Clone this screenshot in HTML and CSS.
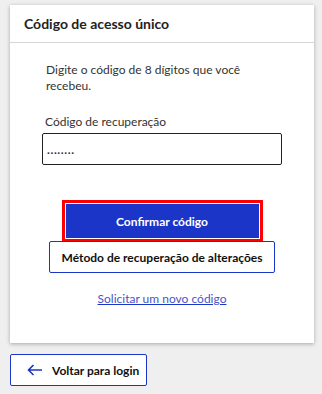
FILE: index.html
```html
<!doctype html>
<html lang="pt">
  <head>
    <meta charset="UTF-8" />
    <meta name="viewport" content="width=device-width, initial-scale=1.0" />
    <title>Código de acesso único</title>
    <link rel="stylesheet" href="styles.css">
  </head>
  <body>
    <div class="card">
      <div class="card-header">
        <h1>Código de acesso único</h1>
      </div>
      <div class="card-body">
        <p class="intro">Digite o código de 8 dígitos que você recebeu.</p>
        <label class="label" for="code">Código de recuperação</label>
        <input id="code" class="input" type="text" value="........" />
        <div class="actions">
          <button class="btn btn-primary">Confirmar código</button>
          <button class="btn btn-outline">Método de recuperação de alterações</button>
          <a class="link" href="#">Solicitar um novo código</a>
        </div>
      </div>
    </div>

    <button class="btn btn-outline btn-back">
      <svg class="arrow" width="16" height="12" viewBox="0 0 16 12" fill="none" stroke="#1a35c8" stroke-width="1.6">
        <path d="M15 6H1.5M6.5 1L1.5 6l5 5" />
      </svg>
      Voltar para login
    </button>
  </body>
</html>
```

FILE: styles.css
```css
body {
  margin: 0;
  padding: 5px 8px 0 10px;
  background-color: #efefef;
  font-family: Lato, "Open Sans", sans-serif;
  color: #222;
}
.card {
  background-color: white;
  box-shadow: 0 1px 4px rgba(0, 0, 0, 0.3);
}
.card-header {
  height: 37px;
  display: flex;
  align-items: center;
  padding: 0 14px;
  border-bottom: 1px solid #d6d6d6;
}
h1 {
  margin: 0;
  font-size: 14px;
  font-weight: 700;
}
.card-body {
  padding: 19px 32px 36px;
  display: flex;
  flex-direction: column;
}
.intro {
  margin: 0 0 20px;
  padding: 0 4px;
  font-size: 12px;
  line-height: 16px;
  color: #333;
}
.label {
  font-size: 12px;
  line-height: 16px;
  padding: 0 3px;
  margin-bottom: 3px;
  color: #333;
}
.input {
  height: 32px;
  box-sizing: border-box;
  border: 1px solid #222;
  border-radius: 2px;
  padding: 0 4px;
  font-family: inherit;
  font-size: 12px;
  font-weight: 700;
  letter-spacing: 0.6px;
  color: #333;
}
.actions {
  display: flex;
  flex-direction: column;
  align-items: center;
  margin-top: 39px;
}
.btn {
  font-family: inherit;
  font-size: 12px;
  font-weight: 700;
  border-radius: 2px;
  white-space: nowrap;
  cursor: pointer;
}
.btn-primary {
  width: 193px;
  height: 34px;
  background-color: #1a35c8;
  color: white;
  border: none;
  border-radius: 0;
  outline: 3px solid #ff0000;
  outline-offset: 1px;
}
.btn-outline {
  height: 32px;
  background-color: white;
  color: #111;
  border: 1px solid #1a35c8;
  padding: 0;
}
.actions .btn-outline {
  width: 226px;
  margin-top: 3px;
}
.link {
  margin-top: 18px;
  font-size: 12px;
  line-height: 16px;
  color: #4c52c9;
  text-decoration-color: #1a35c8;
}
.btn-back {
  margin-top: 11px;
  width: 137px;
  display: flex;
  align-items: center;
  gap: 9px;
  padding: 0 16px;
}
.arrow {
  flex-shrink: 0;
}
```
